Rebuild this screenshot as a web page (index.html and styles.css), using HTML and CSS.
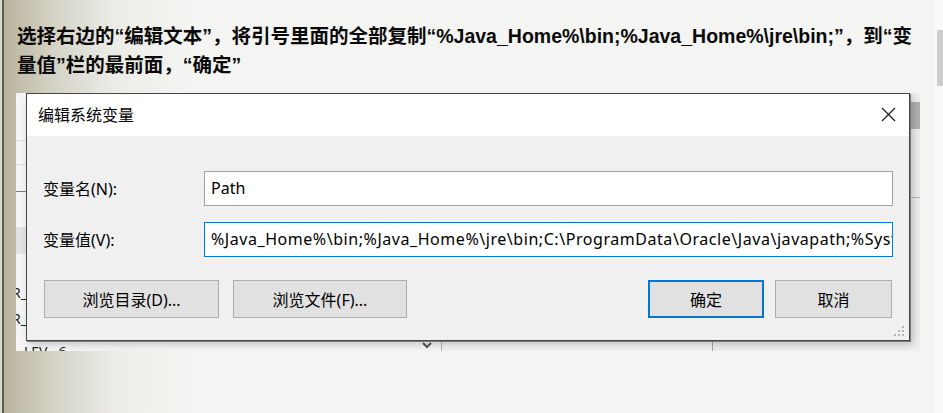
FILE: index.html
```html
<!DOCTYPE html>
<html lang="zh-CN">
<head>
<meta charset="utf-8">
<title>编辑系统变量</title>
<link rel="stylesheet" href="styles.css">
</head>
<body>
<div class="page">
  <main class="slide">
    <h1 class="note">选择右边的“编辑文本”，将引号里面的全部复制“%Java_Home%\bin;%Java_Home%\jre\bin;”，到“变量值”栏的最前面，“确定”</h1>
    <div class="shot">
      <div class="pane pane-left">
        <div class="row r1"></div>
        <div class="row r2"></div>
        <div class="row r3"></div>
        <div class="row r4"></div>
        <div class="row r5"></div>
        <div class="row r6"></div>
        <div class="row r7">R_</div>
        <div class="row r8">R_</div>
        <div class="row r9"><span class="lev">LEV&nbsp;&nbsp;&nbsp;6</span>
          <svg class="drop" width="10" height="7" viewBox="0 0 10 7"><path d="M1 1 L5 5 L9 1" fill="none" stroke="#555" stroke-width="2"/></svg>
        </div>
      </div>
      <div class="pane pane-mid"></div>
      <div class="pane pane-right"><div class="band"></div><div class="rule"></div></div>

      <section class="dialog">
        <header class="titlebar">
          <span class="title">编辑系统变量</span>
          <svg class="close" width="15" height="15" viewBox="0 0 15 15"><path d="M1 1 L14 14 M14 1 L1 14" stroke="#1a1a1a" stroke-width="1.2" fill="none"/></svg>
        </header>
        <div class="body">
          <div class="fields">
            <span class="label">变量名(N):</span>
            <div class="input">Path</div>
            <span class="label">变量值(V):</span>
            <div class="input focus">%Java_Home%\bin;%Java_Home%\jre\bin;C:\ProgramData\Oracle\Java\javapath;%SystemRoot%\system32;%SystemRoot%</div>
          </div>
          <div class="buttons">
            <div class="group left">
              <button class="btn wide">浏览目录(D)...</button>
              <button class="btn wide2">浏览文件(F)...</button>
            </div>
            <div class="group right">
              <button class="btn ok">确定</button>
              <button class="btn cancel">取消</button>
            </div>
          </div>
          <svg class="grip" width="12" height="12" viewBox="0 0 12 12" fill="#b4b4b4">
            <rect x="9" y="1" width="2" height="2"/>
            <rect x="5" y="5" width="2" height="2"/><rect x="9" y="5" width="2" height="2"/>
            <rect x="1" y="9" width="2" height="2"/><rect x="5" y="9" width="2" height="2"/><rect x="9" y="9" width="2" height="2"/>
          </svg>
        </div>
      </section>
    </div>
  </main>
  <div class="scrollbar"><div class="thumb"></div></div>
</div>
</body>
</html>
```

FILE: styles.css
```css
* { box-sizing: border-box; }
html, body { margin: 0; padding: 0; }
body { width: 943px; height: 413px; overflow: hidden; }

.page {
  display: flex;
  width: 943px;
  height: 413px;
}

.slide {
  flex: 1;
  height: 413px;
  background: linear-gradient(to right, #d9d9d2 0, #d9d9d2 2px, #5e5d56 2px, #5e5d56 4px, #b8b49e 4px, #d3d1c3 50px, #ebebe6 110px, #f4f4f2 190px);
}

.note {
  margin: 0;
  padding: 22px 0 0 17px;
  width: 925px;
  font-family: "Liberation Sans", "Noto Sans CJK SC", sans-serif;
  font-weight: 700;
  font-size: 19.5px;
  line-height: 29px;
  color: #0a0a0a;
}

.shot {
  position: relative;
  display: flex;
  margin: 13px 0 0 16px;
  width: 904px;
  height: 258px;
  background: #f0f0f0;
  overflow: hidden;
  font-family: "Noto Sans", "Noto Sans CJK SC", sans-serif;
}

.pane { height: 100%; }
.pane-left {
  width: 426px;
  display: flex;
  flex-direction: column;
  background: #f5f5f5;
  border-right: 1px solid #b4b4b4;
}
.pane-mid {
  width: 271px;
  background: #f2f2f2;
  border-right: 1px solid #a6a6a6;
}
.pane-right {
  flex: 1;
  background: #eeeeee;
  padding-top: 9px;
}
.band { height: 27px; background: #b0b0b0; }
.rule { margin-top: 68px; height: 1px; background: #c7b3b3; }

.row { flex: none; font-size: 14px; color: #222; }
.r1 { height: 48px; border-bottom: 1px solid #d9d9d9; }
.r2 { height: 24px; border-bottom: 1px solid #d9d9d9; }
.r3 { height: 27px; border-bottom: 1px solid #7c7c7c; }
.r4 { height: 35px; }
.r5 { height: 27px; background: #e2e2e2; }
.r6 { height: 26px; }
.r7, .r8 { height: 26px; line-height: 26px; text-indent: -4px; }
.r9 {
  flex: 1;
  display: flex;
  justify-content: space-between;
  align-items: flex-start;
  padding: 12px 9px 0 8px;
  line-height: 16px;
}
.drop { margin-top: -2px; }

.dialog {
  position: absolute;
  left: 10px;
  top: 0;
  width: 884px;
  height: 248px;
  display: flex;
  flex-direction: column;
  border: 1px solid #464646;
  box-shadow: 1px 1px 0 #7a7a7a, 3px 3px 8px rgba(0, 0, 0, 0.22);
  font-size: 16px;
  color: #000;
}

.titlebar {
  height: 42px;
  flex: none;
  display: flex;
  align-items: center;
  justify-content: space-between;
  padding: 0 13px 0 11px;
  background: #fff;
}
.title { font-size: 16px; line-height: 20px; }
.close { margin-top: -2px; }

.body {
  position: relative;
  flex: 1;
  background: #f0f0f0;
  padding: 35px 16px 0 16px;
}

.fields {
  display: grid;
  grid-template-columns: 161px 1fr;
  grid-auto-rows: 35px;
  row-gap: 16px;
  align-items: center;
}
.label { font-size: 16px; line-height: 20px; }
.input {
  height: 35px;
  border: 1px solid #a2a2a2;
  background: #fff;
  padding: 0 6px;
  line-height: 33px;
  font-size: 16px;
  white-space: nowrap;
  overflow: hidden;
}
.input.focus { border-color: #0078d7; letter-spacing: 0.55px; }

.buttons {
  display: flex;
  justify-content: space-between;
  margin-top: 23px;
  padding: 0 1px;
}
.group { display: flex; }
.group.left { gap: 14px; }
.group.right { gap: 11px; }

.btn {
  height: 38px;
  border: 1px solid #adadad;
  background: #e1e1e1;
  font-family: "Noto Sans", "Noto Sans CJK SC", sans-serif;
  font-size: 16px;
  color: #000;
  padding: 0;
}
.wide { width: 175px; }
.wide2 { width: 174px; }
.ok { width: 116px; border: 2px solid #0078d7; }
.cancel { width: 117px; }

.grip {
  position: absolute;
  right: 4px;
  bottom: 3px;
}

.scrollbar {
  width: 8px;
  height: 413px;
  background: #f9f9f9;
  padding: 30px 0 0 2px;
}
.thumb { width: 6px; height: 56px; background: #cdcdcd; }
```
